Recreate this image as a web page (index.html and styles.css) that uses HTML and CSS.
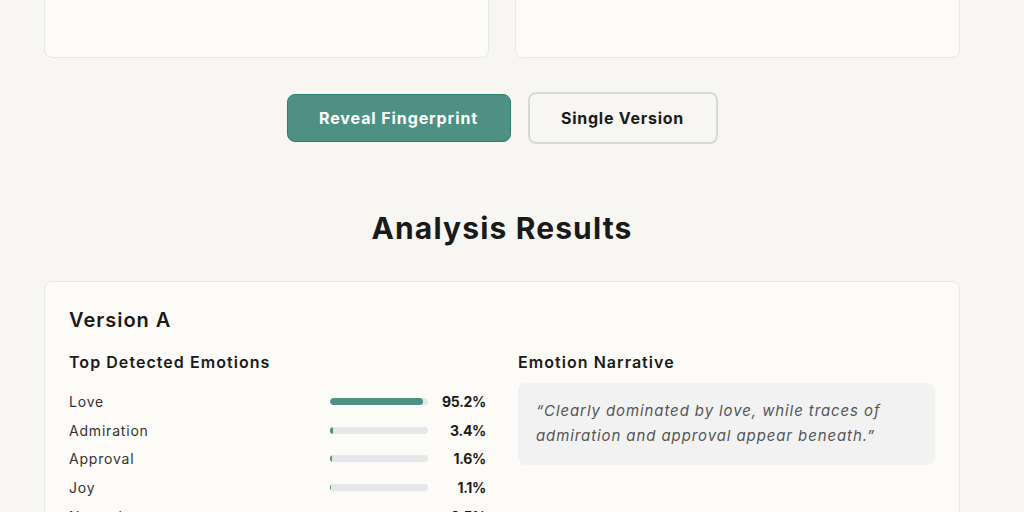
FILE: index.html
```html
<!DOCTYPE html>
<html lang="en">
<head>
<meta charset="utf-8">
<title>Emotion Fingerprint</title>
<link rel="stylesheet" href="styles.css">
</head>
<body>
<main class="page">
  <section class="inputs">
    <div class="input-card"></div>
    <div class="input-card"></div>
  </section>

  <div class="actions">
    <button class="btn btn-primary">Reveal Fingerprint</button>
    <button class="btn btn-secondary">Single Version</button>
  </div>

  <h2 class="results-title">Analysis Results</h2>

  <section class="result-card">
    <h3 class="version-title">Version A</h3>
    <div class="result-grid">
      <div class="emotions">
        <h4 class="sub-title">Top Detected Emotions</h4>
        <ul class="emotion-list">
          <li class="emotion-row">
            <span class="emotion-name">Love</span>
            <span class="bar"><span class="bar-fill" style="width:95.2%"></span></span>
            <span class="emotion-pct">95.2%</span>
          </li>
          <li class="emotion-row">
            <span class="emotion-name">Admiration</span>
            <span class="bar"><span class="bar-fill" style="width:3.4%"></span></span>
            <span class="emotion-pct">3.4%</span>
          </li>
          <li class="emotion-row">
            <span class="emotion-name">Approval</span>
            <span class="bar"><span class="bar-fill" style="width:1.6%"></span></span>
            <span class="emotion-pct">1.6%</span>
          </li>
          <li class="emotion-row">
            <span class="emotion-name">Joy</span>
            <span class="bar"><span class="bar-fill" style="width:1.1%"></span></span>
            <span class="emotion-pct">1.1%</span>
          </li>
          <li class="emotion-row">
            <span class="emotion-name">Neutral</span>
            <span class="bar"><span class="bar-fill" style="width:0.5%"></span></span>
            <span class="emotion-pct">0.5%</span>
          </li>
        </ul>
      </div>
      <div class="narrative">
        <h4 class="sub-title">Emotion Narrative</h4>
        <p class="narrative-box">“Clearly dominated by love, while traces of admiration and approval appear beneath.”</p>
      </div>
    </div>
  </section>
</main>
</body>
</html>
```

FILE: styles.css
```css
* { box-sizing: border-box; }

html, body {
  margin: 0;
  padding: 0;
  background: #f7f6f2;
  font-family: "Inter", "Noto Sans", "Liberation Sans", sans-serif;
  color: #1a1a1a;
  overflow: hidden;
}

.page {
  width: 916px;
  margin: 0 0 0 44px;
}

.inputs {
  display: grid;
  grid-template-columns: 1fr 1fr;
  gap: 26px;
  margin-top: -142px;
}

.input-card {
  height: 200px;
  background: #fcfbf8;
  border: 1.5px solid #e6e7ea;
  border-radius: 8px;
}

.actions {
  display: flex;
  justify-content: center;
  align-items: center;
  gap: 17px;
  margin-top: 34px;
}

.btn {
  font-family: inherit;
  font-size: 16px;
  font-weight: 700;
  border-radius: 8px;
  cursor: pointer;
}

.btn-primary {
  width: 224px;
  height: 48px;
  background: #4e9184;
  border: 1px solid #2c7e6e;
  color: #ffffff;
  letter-spacing: 0.9px;
}

.btn-secondary {
  width: 190px;
  height: 52px;
  background: #f7f6f2;
  border: 2px solid #d6d8de;
  color: #1a1a1a;
  letter-spacing: 0.75px;
}

.results-title {
  margin: 64px 0 0;
  text-align: center;
  font-size: 30px;
  font-weight: 700;
  line-height: 40px;
  letter-spacing: 1.15px;
}

.result-card {
  margin-top: 33px;
  background: #fcfbf8;
  border: 1px solid #e6e7ea;
  border-radius: 8px;
  padding: 24px;
  height: 400px;
}

.version-title {
  margin: 0;
  font-size: 20px;
  font-weight: 600;
  line-height: 28px;
  letter-spacing: 1px;
}

.result-grid {
  display: grid;
  grid-template-columns: 1fr 1fr;
  gap: 32px;
  margin-top: 16px;
}

.sub-title {
  margin: 0;
  font-size: 16px;
  font-weight: 600;
  line-height: 24px;
  letter-spacing: 1.05px;
}

.emotion-list {
  list-style: none;
  margin: 13px 0 0;
  padding: 0;
}

.emotion-row {
  display: flex;
  align-items: center;
  height: 28.7px;
  font-size: 14px;
}

.emotion-name {
  flex: 1;
  color: #333333;
  font-weight: 400;
  letter-spacing: 0.8px;
}

.bar {
  width: 98px;
  height: 7px;
  background: #e5e7eb;
  border-radius: 4px;
  overflow: hidden;
}

.bar-fill {
  display: block;
  height: 100%;
  min-width: 1px;
  background: #4e9184;
  border-radius: 4px;
}

.emotion-pct {
  width: 58px;
  text-align: right;
  font-weight: 700;
  color: #1a1a1a;
  letter-spacing: -0.3px;
}

.narrative-box {
  margin: 9px 0 0;
  background: #f2f2f2;
  border-radius: 8px;
  padding: 15px 18px 17px;
  font-size: 15px;
  line-height: 25px;
  font-style: italic;
  color: #555555;
  letter-spacing: 0.9px;
}
```
